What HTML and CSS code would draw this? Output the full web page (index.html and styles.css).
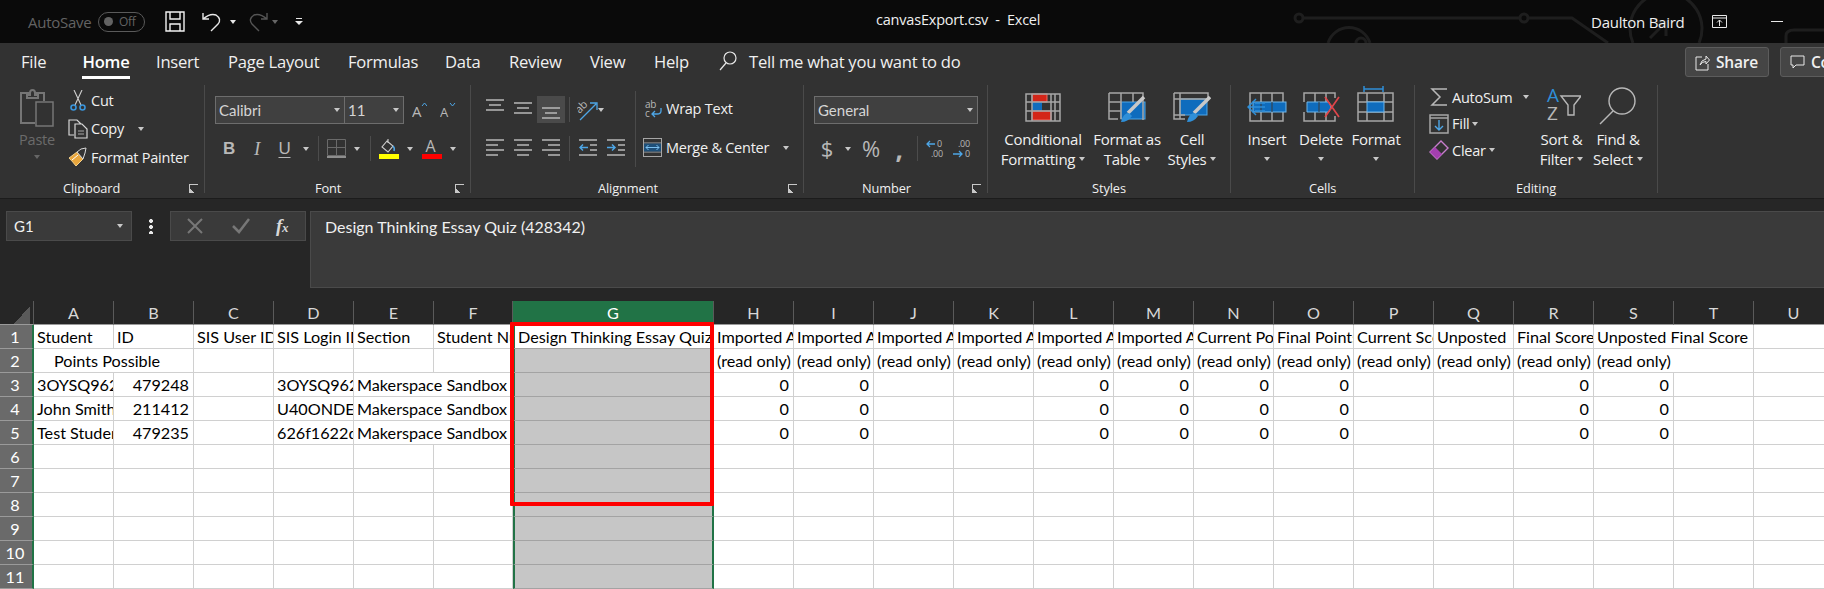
FILE: index.html
```html
<!DOCTYPE html>
<html lang="en">
<head>
    <meta charset="UTF-8">
    <meta name="viewport" content="width=device-width, initial-scale=1.0">
    <title>canvasExport.csv - Excel</title>
    <link rel="stylesheet" href="styles.css">
</head>
<body>
    <header class="titlebar">
        <svg class="circuit" width="560" height="43" viewBox="0 0 560 43" fill="none">
            <circle cx="11" cy="18" r="4"/>
            <path d="M15 18H232M240 18H284L320 43M40 43a22 22 0 0 1 42 0M345 43a36 36 0 1 1 66 0M362 38L378 22H362M378 22V36M498 43V36Q498 30 506 30H560M68 43a5 5 0 0 1 10 0"/>
            <circle cx="236" cy="18" r="4"/>
        </svg>
        <div class="quick">
            <span class="autosave">AutoSave</span>
            <span class="toggle"><i></i>Off</span>
            <svg class="save" width="20" height="21" viewBox="0 0 20 21" fill="none" stroke="#f2f2f2" stroke-width="1.4"><path d="M1 1H19V20H1ZM5 1V8H15V1M5 20V13H15V20"/></svg>
            <svg class="undo" width="20" height="21" viewBox="0 0 20 21" fill="none" stroke="#e8e8e8" stroke-width="1.4"><path d="M1 2V8H7M1 8Q8 2 14 4Q20 8 16 13L9 20"/></svg>
            <i class="caret white q1"></i>
            <svg class="redo" width="20" height="21" viewBox="0 0 20 21" fill="none" stroke="#555" stroke-width="1.4"><path d="M19 2V8H13M19 8Q12 2 6 4Q0 8 4 13L11 20"/></svg>
            <i class="caret dim q2"></i>
            <svg class="custom" width="8" height="8" viewBox="0 0 8 8" fill="#e8e8e8"><path d="M1 0H7V1H1ZM0 3H8L4 7Z"/></svg>
        </div>
        <div class="doc-title">canvasExport.csv&nbsp; - &nbsp;Excel</div>
        <div class="user">
            <span class="user-name">Daulton Baird</span>
            <svg width="15" height="13" viewBox="0 0 15 13" fill="none" stroke="#e8e8e8"><path d="M.5.5H14.5V12.5H.5ZM.5 3H14.5M7.5 11V5M5 7.5L7.5 5L10 7.5"/></svg>
            <i class="minimize"></i>
        </div>
    </header>

    <nav class="tabs">
        <span>File</span>
        <span class="active">Home</span>
        <span>Insert</span>
        <span>Page Layout</span>
        <span>Formulas</span>
        <span>Data</span>
        <span>Review</span>
        <span>View</span>
        <span>Help</span>
        <svg width="18" height="20" viewBox="0 0 18 20" fill="none" stroke="#e8e8e8" stroke-width="1.2"><circle cx="11" cy="7" r="6"/><path d="M7 12L1 19"/></svg>
        <span>Tell me what you want to do</span>
        <div class="tab-actions">
            <button class="action share">
                <svg width="15" height="17" viewBox="0 0 15 17" fill="none" stroke="#e8e8e8"><path d="M7 3H1V16H13V10M5 11Q6 6 11 5V2L14.500 6L11 10V7.500Q7 7.500 5 11Z"/></svg>
                Share
            </button>
            <button class="action">
                <svg width="15" height="15" viewBox="0 0 15 15" fill="none" stroke="#e8e8e8"><path d="M1 1H14V10H6L3 13V10H1Z"/></svg>
                Comments
            </button>
        </div>
    </nav>

    <section class="ribbon">
        <div class="group clipboard">
            <div class="group-body">
                <div class="paste">
                    <svg width="34" height="38" viewBox="0 0 34 38" fill="none" stroke="#757575" stroke-width="2"><path d="M10 4H1V34H15M24 12V4H15M10 6V4Q10 1 12.500 1Q15 1 15 4V6H18V9H7V6Z"/><path d="M16 13H33V37H16Z" stroke-width="1.5"/></svg>
                    <span>Paste</span>
                    <i class="caret dim"></i>
                </div>
                <div class="tool-list">
                    <div class="tool">
                        <svg width="20" height="21" viewBox="0 0 20 21" fill="none" stroke="#cfcfcf" stroke-width="1.1"><path d="M6 0L13 15M14 0L7 15"/><g stroke="#3a96dd" stroke-width="1.6"><circle cx="5.500" cy="17.500" r="2.500"/><circle cx="14.500" cy="17.500" r="2.500"/></g></svg>
                        <span>Cut</span>
                    </div>
                    <div class="tool">
                        <svg width="20" height="20" viewBox="0 0 20 20" fill="none" stroke="#d8d8d8" stroke-width="1.2"><path d="M7 1H1V16H6"/><path d="M7 1H9L13 5M7 5H14L19 10V19H7Z"/><path d="M10 12H16M10 15H16" stroke="#a6a6a6"/></svg>
                        <span>Copy</span>
                        <i class="caret copy-caret"></i>
                    </div>
                    <div class="tool">
                        <svg width="20" height="20" viewBox="0 0 20 20"><path d="M1 11L9 5L15 12L8 19Q5 15 1 11Z" fill="#e9a63c" stroke="#f5d08a"/><path d="M9 5L13 2L18 1L17 6L15 12Z" fill="#333" stroke="#d8d8d8"/><path d="M4 13L10 8" stroke="#fff"/></svg>
                        <span>Format Painter</span>
                    </div>
                </div>
            </div>
            <div class="group-label"><span>Clipboard</span><i class="launcher"></i></div>
        </div>

        <div class="group font">
            <div class="group-body stack">
                <div class="combo-row">
                    <div class="combo font-name"><span>Calibri</span><i class="caret"></i></div>
                    <div class="combo font-size"><span>11</span><i class="caret"></i></div>
                    <svg class="grow" width="15" height="16" viewBox="0 0 15 16"><text x="0" y="15" class="ico-text" font-size="15">A</text><path d="M10 4L12.500 1L15 4" fill="none" stroke="#4ea6e6"/></svg>
                    <svg class="shrink" width="16" height="16" viewBox="0 0 16 16"><text x="0" y="15" class="ico-text" font-size="13">A</text><path d="M10 1L12.500 4L15 1" fill="none" stroke="#4ea6e6"/></svg>
                </div>
                <div class="font-tools">
                    <b class="btn-b">B</b>
                    <i class="btn-i">I</i>
                    <span class="btn-u">U</span>
                    <i class="caret"></i>
                    <i class="vsep"></i>
                    <svg width="19" height="19" viewBox="0 0 19 19" fill="none" stroke="#6a6a6a"><path d="M.5.5H18.500V16.500H.5ZM9.500.5V16.500M.5 8.500H18.500"/><path d="M0 18H19" stroke="#a6a6a6" stroke-width="1.6"/></svg>
                    <i class="caret"></i>
                    <i class="vsep"></i>
                    <svg width="20" height="21" viewBox="0 0 20 21" fill="none" stroke="#cfcfcf" stroke-width="1.1"><path d="M8 3L3 9L9 14L14 8ZM9 1V5"/><path d="M14 8Q16 10 15 13" stroke="#4ea6e6" stroke-width="1.5"/><rect x="0" y="16" width="20" height="5" fill="#ffff00" stroke="none"/></svg>
                    <i class="caret"></i>
                    <svg width="20" height="21" viewBox="0 0 20 21"><text x="3.500" y="14" class="ico-text" font-size="16">A</text><rect x="0" y="16" width="20" height="5" fill="#ff0000"/></svg>
                    <i class="caret"></i>
                </div>
            </div>
            <div class="group-label"><span>Font</span><i class="launcher"></i></div>
        </div>

        <div class="group alignment">
            <div class="group-body">
                <div class="align-grid">
                    <svg class="ln" width="18" height="27" viewBox="0 0 18 27"><path d="M0 4H18M3 9H15M0 14H18"/></svg>
                    <svg class="ln" width="18" height="27" viewBox="0 0 18 27"><path d="M0 7H18M3 12H15M0 17H18"/></svg>
                    <span class="align-on"><svg class="ln" width="18" height="27" viewBox="0 0 18 27"><path d="M0 12H18M3 17H15M0 22H18"/></svg></span>
                    <i class="vsep"></i>
                    <svg width="22" height="22" viewBox="0 0 22 22"><text x="0" y="11" class="ico-text" font-size="11" transform="rotate(-45 6 10)">ab</text><path d="M3 21L19 5M13 4H20V11" fill="none" stroke="#4ea6e6" stroke-width="1.3"/></svg>
                    <i class="caret"></i>
                    <svg class="ln" width="18" height="27" viewBox="0 0 18 27"><path d="M0 5H18M0 10H12M0 15H18M0 20H12"/></svg>
                    <svg class="ln" width="18" height="27" viewBox="0 0 18 27"><path d="M0 5H18M3 10H15M0 15H18M3 20H15"/></svg>
                    <svg class="ln" width="18" height="27" viewBox="0 0 18 27"><path d="M0 5H18M6 10H18M0 15H18M6 20H18"/></svg>
                    <i class="vsep"></i>
                    <svg class="ln" width="18" height="27" viewBox="0 0 18 27"><path d="M0 5H18M11 10H18M11 15H18M0 20H18"/><path d="M9 12.500H1M4 9.500L1 12.500L4 15.500" class="blue"/></svg>
                    <svg class="ln" width="18" height="27" viewBox="0 0 18 27"><path d="M0 5H18M11 10H18M11 15H18M0 20H18"/><path d="M0 12.500H8M5 9.500L8 12.500L5 15.500" class="blue"/></svg>
                </div>
                <i class="tall-sep"></i>
                <div class="wrap-col">
                    <div class="tool">
                        <svg width="20" height="20" viewBox="0 0 20 20"><text x="2" y="9" class="ico-text" font-size="10">ab</text><text x="2" y="18" class="ico-text" font-size="10">c</text><path d="M18 9V12Q18 15 14 15H9M12 12L9 15L12 18" fill="none" stroke="#4ea6e6" stroke-width="1.3"/></svg>
                        <span>Wrap Text</span>
                    </div>
                    <div class="tool">
                        <svg width="20" height="20" viewBox="0 0 20 20" fill="none"><rect x=".5" y=".5" width="18" height="18" stroke="#a6a6a6"/><path d="M.5 5H18.500M.5 14H18.500" stroke="#a6a6a6"/><rect x="1" y="5.500" width="17" height="8" fill="#1e4f78"/><path d="M3 9.500H16M5.500 7L3 9.500L5.500 12M13.500 7L16 9.500L13.500 12" stroke="#7cc0f0"/></svg>
                        <span>Merge &amp; Center</span>
                        <i class="caret merge-caret"></i>
                    </div>
                </div>
            </div>
            <div class="group-label"><span>Alignment</span><i class="launcher"></i></div>
        </div>

        <div class="group number">
            <div class="group-body stack">
                <div class="combo general"><span>General</span><i class="caret"></i></div>
                <div class="number-tools">
                    <span class="sym-dollar">$</span>
                    <i class="caret"></i>
                    <span class="sym-pct">%</span>
                    <span class="sym-comma">,</span>
                    <i class="vsep"></i>
                    <svg width="20" height="21" viewBox="0 0 20 21"><text x="11" y="9" class="ico-text" font-size="9">0</text><text x="5" y="19" class="ico-text" font-size="9">.00</text><path d="M9 6H1M4 3L1 6L4 9" fill="none" stroke="#4ea6e6" stroke-width="1.3"/></svg>
                    <svg width="20" height="21" viewBox="0 0 20 21"><text x="5" y="9" class="ico-text" font-size="9">.00</text><text x="12" y="19" class="ico-text" font-size="9">0</text><path d="M0 16H9M6 13L9 16L6 19" fill="none" stroke="#4ea6e6" stroke-width="1.3"/></svg>
                </div>
            </div>
            <div class="group-label"><span>Number</span><i class="launcher"></i></div>
        </div>

        <div class="group styles">
            <div class="group-body">
                <div class="big w-cond">
                    <svg width="36" height="36" viewBox="0 0 36 36" fill="none">
                        <rect x="7" y="8" width="15" height="8" fill="#d32518" stroke="#f06a60"/>
                        <rect x="7" y="16" width="10" height="9" fill="#0f6cbd"/>
                        <rect x="7" y="25" width="19" height="9" fill="#d32518" stroke="#f06a60"/>
                        <path class="cell-grid" d="M1 8H35V35H1ZM7 8V35M26 8V35M30 8V35M1 16H35M1 25H35"/>
                    </svg>
                    <span>Conditional</span>
                    <span>Formatting<i class="caret"></i></span>
                </div>
                <div class="big w-table">
                    <svg width="38" height="36" viewBox="0 0 38 36" fill="none">
                        <rect x="13" y="16" width="24" height="17" fill="#0f6cbd" stroke="#4ea6e6"/>
                        <path class="cell-grid" d="M1 7H35V34M1 7V33H10M13 7V33M25 7V16M1 16H13M1 25H13"/>
                        <path d="M36 11L20 27" stroke="#c8c8c8" stroke-width="3.500"/><path d="M21 27Q15 27 13 36Q20 36 24 30Z" fill="#2f8fd8"/>
                    </svg>
                    <span>Format as</span>
                    <span>Table<i class="caret"></i></span>
                </div>
                <div class="big w-cell">
                    <svg width="38" height="36" viewBox="0 0 38 36" fill="none">
                        <rect x="7" y="13" width="27" height="16" fill="#0f6cbd" stroke="#4ea6e6"/>
                        <path class="cell-grid" d="M1 7H35V13M1 7V33H12M7 7V33M1 13H35M1 29H12"/>
                        <path d="M37 11L21 27" stroke="#c8c8c8" stroke-width="3.500"/><path d="M22 27Q16 27 14 36Q21 36 25 30Z" fill="#2f8fd8"/>
                    </svg>
                    <span>Cell</span>
                    <span>Styles<i class="caret"></i></span>
                </div>
            </div>
            <div class="group-label"><span>Styles</span></div>
        </div>

        <div class="group cells">
            <div class="group-body">
                <div class="big w-ins">
                    <svg width="40" height="36" viewBox="0 0 40 36" fill="none">
                        <path class="cell-grid" d="M3 7H36V35H3ZM14 7V35M25 7V35"/>
                        <rect x="6" y="16" width="33" height="10" fill="#0f6cbd" stroke="#6fb6ea"/>
                        <path d="M14 16V26M25 16V26" stroke="#3a3a3a"/>
                        <path d="M18 21H2M9 13L1 21L9 29M18 17H8M18 25H8" stroke="#2f8fd8" stroke-width="1.500"/>
                    </svg>
                    <span>Insert</span>
                    <i class="caret"></i>
                </div>
                <div class="big w-del">
                    <svg width="40" height="36" viewBox="0 0 40 36" fill="none">
                        <path class="cell-grid" d="M3 16V7H34V12M3 26V35H34V30M14 7V16M25 7V16M14 26V35M25 26V35"/>
                        <path d="M6 16H28L30 21L28 26H6Z" fill="#0f6cbd" stroke="#6fb6ea"/>
                        <path d="M18 16V26" stroke="#3a3a3a"/>
                        <path d="M24 11L38 31M38 11L24 31" stroke="#e0454a" stroke-width="1.700"/>
                    </svg>
                    <span>Delete</span>
                    <i class="caret"></i>
                </div>
                <div class="big w-fmt">
                    <svg width="38" height="36" viewBox="0 0 38 36" fill="none">
                        <path d="M7 3H26M7 0V6M26 0V6" stroke="#2f8fd8" stroke-width="1.500"/>
                        <path class="cell-grid" d="M1 7H36V35H1ZM10 7V16M10 26V35M27 7V16M27 26V35M1 16H36M1 26H36"/>
                        <rect x="10" y="16" width="17" height="10" fill="#0f6cbd" stroke="#6fb6ea"/>
                    </svg>
                    <span>Format</span>
                    <i class="caret"></i>
                </div>
            </div>
            <div class="group-label"><span>Cells</span></div>
        </div>

        <div class="group editing">
            <div class="group-body">
                <div class="edit-list">
                    <div class="tool">
                        <svg width="20" height="20" viewBox="0 0 20 20" fill="none" stroke="#b8b8b8" stroke-width="1.500"><path d="M18 2H3L11 10L3 18H18"/></svg>
                        <span>AutoSum</span>
                        <i class="caret sum-caret"></i>
                    </div>
                    <div class="tool">
                        <svg width="20" height="20" viewBox="0 0 20 20" fill="none"><path d="M1 1H19V19H1ZM1 4H19" stroke="#a6a6a6" stroke-width="1.500"/><path d="M10 6V16M6 12L10 16L14 12" stroke="#4ea6e6" stroke-width="1.400"/></svg>
                        <span>Fill</span>
                        <i class="caret"></i>
                    </div>
                    <div class="tool">
                        <svg width="20" height="20" viewBox="0 0 20 20"><path d="M1 12L12 1L19 8L8 19Z" fill="none" stroke="#c77dcc" stroke-width="1.400"/><path d="M1 12L6 7L13 14L8 19Z" fill="#a43fb0"/></svg>
                        <span>Clear</span>
                        <i class="caret"></i>
                    </div>
                </div>
                <div class="big w-sort">
                    <svg width="38" height="36" viewBox="0 0 38 36" fill="none">
                        <text x="4" y="16" font-size="19" class="ico-blue">A</text>
                        <text x="4" y="34" font-size="19" class="ico-text">Z</text>
                        <path d="M18 10H38L31 19V29H25V19Z" stroke="#b8b8b8" stroke-width="1.400"/>
                    </svg>
                    <span>Sort &amp;</span>
                    <span>Filter<i class="caret"></i></span>
                </div>
                <div class="big w-find">
                    <svg width="38" height="38" viewBox="0 0 38 38" fill="none" stroke="#b8b8b8" stroke-width="1.400"><circle cx="23" cy="14" r="13"/><path d="M14 24L1 37"/></svg>
                    <span>Find &amp;</span>
                    <span>Select<i class="caret"></i></span>
                </div>
            </div>
            <div class="group-label"><span>Editing</span></div>
        </div>
    </section>

    <section class="formula-bar">
        <div class="name-box"><span>G1</span><i class="caret"></i></div>
        <i class="dots"></i>
        <div class="fx-box">
            <svg width="16" height="16" viewBox="0 0 16 16" fill="none" stroke="#777" stroke-width="2"><path d="M1 1L15 15M15 1L1 15"/></svg>
            <svg width="18" height="16" viewBox="0 0 18 16" fill="none" stroke="#777" stroke-width="2.500"><path d="M1 8L7 14L17 1"/></svg>
            <span class="fx">f<small>x</small></span>
        </div>
        <div class="formula-text">Design Thinking Essay Quiz (428342)</div>
    </section>

    <main class="sheet">
        <table>
            <colgroup>
                <col class="c-head"><col class="c-80"><col class="c-80"><col class="c-80"><col class="c-80"><col class="c-80"><col class="c-79"><col class="c-g">
                <col class="c-80"><col class="c-80"><col class="c-80"><col class="c-80"><col class="c-80"><col class="c-80"><col class="c-80"><col class="c-80"><col class="c-80"><col class="c-80"><col class="c-80"><col class="c-80"><col class="c-80"><col class="c-80">
            </colgroup>
            <thead>
                <tr>
                    <th class="corner"><i></i></th>
                    <th>A</th><th>B</th><th>C</th><th>D</th><th>E</th><th>F</th><th class="col-on">G</th><th>H</th><th>I</th><th>J</th><th>K</th><th>L</th><th>M</th><th>N</th><th>O</th><th>P</th><th>Q</th><th>R</th><th>S</th><th>T</th><th>U</th>
                </tr>
            </thead>
            <tbody>
                <tr><th>1</th><td>Student</td><td>ID</td><td>SIS User ID</td><td>SIS Login ID</td><td>Section</td><td>Student Number</td><td class="sel first">Design Thinking Essay Quiz</td><td>Imported Assignments</td><td>Imported Assignments</td><td>Imported Assignments</td><td>Imported Assignments</td><td>Imported Assignments</td><td>Imported Assignments</td><td>Current Points</td><td>Final Points</td><td>Current Score</td><td>Unposted</td><td>Final Score</td><td colspan="2">Unposted Final Score</td><td></td></tr>
                <tr><th>2</th><td colspan="2" class="possible">Points Possible</td><td></td><td></td><td></td><td></td><td class="sel"></td><td>(read only)</td><td>(read only)</td><td>(read only)</td><td>(read only)</td><td>(read only)</td><td>(read only)</td><td>(read only)</td><td>(read only)</td><td>(read only)</td><td>(read only)</td><td>(read only)</td><td colspan="2">(read only)</td><td></td></tr>
                <tr><th>3</th><td>3OYSQ962</td><td class="num">479248</td><td></td><td>3OYSQ962</td><td colspan="2">Makerspace Sandbox</td><td class="sel"></td><td class="num">0</td><td class="num">0</td><td></td><td></td><td class="num">0</td><td class="num">0</td><td class="num">0</td><td class="num">0</td><td></td><td></td><td class="num">0</td><td class="num">0</td><td></td><td></td></tr>
                <tr><th>4</th><td>John Smith</td><td class="num">211412</td><td></td><td>U40ONDE12</td><td colspan="2">Makerspace Sandbox</td><td class="sel"></td><td class="num">0</td><td class="num">0</td><td></td><td></td><td class="num">0</td><td class="num">0</td><td class="num">0</td><td class="num">0</td><td></td><td></td><td class="num">0</td><td class="num">0</td><td></td><td></td></tr>
                <tr><th>5</th><td>Test Student</td><td class="num">479235</td><td></td><td>626f1622d8</td><td colspan="2">Makerspace Sandbox</td><td class="sel"></td><td class="num">0</td><td class="num">0</td><td></td><td></td><td class="num">0</td><td class="num">0</td><td class="num">0</td><td class="num">0</td><td></td><td></td><td class="num">0</td><td class="num">0</td><td></td><td></td></tr>
                <tr><th>6</th><td></td><td></td><td></td><td></td><td></td><td></td><td class="sel"></td><td></td><td></td><td></td><td></td><td></td><td></td><td></td><td></td><td></td><td></td><td></td><td></td><td></td><td></td></tr>
                <tr><th>7</th><td></td><td></td><td></td><td></td><td></td><td></td><td class="sel"></td><td></td><td></td><td></td><td></td><td></td><td></td><td></td><td></td><td></td><td></td><td></td><td></td><td></td><td></td></tr>
                <tr><th>8</th><td></td><td></td><td></td><td></td><td></td><td></td><td class="sel"></td><td></td><td></td><td></td><td></td><td></td><td></td><td></td><td></td><td></td><td></td><td></td><td></td><td></td><td></td></tr>
                <tr><th>9</th><td></td><td></td><td></td><td></td><td></td><td></td><td class="sel"></td><td></td><td></td><td></td><td></td><td></td><td></td><td></td><td></td><td></td><td></td><td></td><td></td><td></td><td></td></tr>
                <tr><th>10</th><td></td><td></td><td></td><td></td><td></td><td></td><td class="sel"></td><td></td><td></td><td></td><td></td><td></td><td></td><td></td><td></td><td></td><td></td><td></td><td></td><td></td><td></td></tr>
                <tr><th>11</th><td></td><td></td><td></td><td></td><td></td><td></td><td class="sel"></td><td></td><td></td><td></td><td></td><td></td><td></td><td></td><td></td><td></td><td></td><td></td><td></td><td></td><td></td></tr>
            </tbody>
        </table>
        <div class="callout"></div>
    </main>
</body>
</html>
```

FILE: styles.css
```css
* {
    box-sizing: border-box;
}
html, body {
    margin: 0;
    height: 589px;
    overflow: hidden;
}
body {
    font-family: "Open Sans", sans-serif;
    font-size: 14.5px;
    letter-spacing: -0.25px;
    color: #f0f0f0;
    background-color: #262626;
}
svg {
    display: block;
    flex: none;
}
.ico-text {
    fill: #b8b8b8;
    font-family: "Open Sans", sans-serif;
}
.ico-blue {
    fill: #2f8fd8;
    font-family: "Open Sans", sans-serif;
}
.caret {
    display: inline-block;
    flex: none;
    width: 0;
    height: 0;
    border-left: 3.5px solid transparent;
    border-right: 3.5px solid transparent;
    border-top: 4px solid #c8c8c8;
}
.caret.white {
    border-top-color: #e8e8e8;
}
.caret.dim {
    border-top-color: #666;
}
.vsep {
    display: block;
    width: 1px;
    height: 25px;
    background-color: #4c4c4c;
}

/* title bar */
.titlebar {
    position: relative;
    display: grid;
    grid-template-columns: 876px 1fr 233px;
    align-items: center;
    height: 43px;
    background-color: #0a0a0a;
    overflow: hidden;
}
.circuit {
    position: absolute;
    left: 1288px;
    top: 0;
    stroke: #1e1e1e;
    stroke-width: 3;
}
.quick {
    position: relative;
    display: flex;
    align-items: center;
    padding-left: 28px;
}
.autosave {
    width: 70px;
    font-size: 15px;
    color: #636363;
}
.toggle {
    display: flex;
    align-items: center;
    gap: 6px;
    width: 47px;
    height: 20px;
    padding-left: 5px;
    font-size: 12px;
    color: #636363;
    border: 1px solid #5a5a5a;
    border-radius: 10px;
}
.toggle i {
    width: 9px;
    height: 9px;
    border-radius: 50%;
    background-color: #636363;
}
.save {
    margin-left: 20px;
}
.undo {
    margin-left: 17px;
}
.q1 {
    margin-left: 8px;
}
.redo {
    margin-left: 12px;
}
.q2 {
    margin-left: 4px;
}
.custom {
    margin-left: 17px;
}
.doc-title {
    position: relative;
    padding-bottom: 4px;
    font-size: 14.5px;
    letter-spacing: -0.2px;
}
.user {
    position: relative;
    display: flex;
    align-items: center;
    height: 100%;
}
.user-name {
    width: 121px;
    font-size: 15px;
}
.minimize {
    width: 12px;
    height: 1px;
    margin-left: 44px;
    background-color: #e8e8e8;
}

/* tabs */
.tabs {
    display: grid;
    grid-template-columns: 61px 74px 72px 120px 97px 64px 81px 64px 65px 30px 1fr auto;
    align-items: center;
    height: 36px;
    padding-left: 21px;
    font-size: 16.6px;
    letter-spacing: -0.25px;
    background-color: #323232;
}
.tabs .active {
    width: 48px;
    height: 36px;
    line-height: 37px;
    text-align: center;
    white-space: nowrap;
    font-weight: 600;
    color: #fff;
    border-bottom: 3px solid #fff;
}
.tab-actions {
    display: flex;
    gap: 11px;
    width: 139px;
    margin-top: 2px;
    overflow: hidden;
}
.action {
    flex: none;
    display: flex;
    align-items: center;
    gap: 6px;
    width: 84px;
    height: 30px;
    padding: 0 0 0 9px;
    font: 600 15.5px "Open Sans", sans-serif;
    letter-spacing: -0.2px;
    color: #f0f0f0;
    background-color: #454545;
    border: 1px solid #5c5c5c;
    border-radius: 3px;
}
.action:not(.share) {
    width: 110px;
    border-radius: 3px 0 0 3px;
}

/* ribbon */
.ribbon {
    display: flex;
    height: 120px;
    padding-top: 6px;
    background-color: #323232;
    border-bottom: 1px solid #1c1c1c;
}
.group {
    display: flex;
    flex-direction: column;
    height: 108px;
    border-right: 1px solid #4a4a4a;
}
.clipboard { width: 205px; }
.font { width: 266px; }
.alignment { width: 333px; }
.number { width: 184px; }
.styles { width: 243px; }
.cells { width: 184px; }
.editing { width: 243px; }
.group-body {
    display: flex;
    height: 98px;
}
.group-body.stack {
    flex-direction: column;
    padding: 11px 0 0 10px;
}
.group-label {
    display: flex;
    align-items: center;
    height: 10px;
    font-size: 12.8px;
    letter-spacing: -0.1px;
}
.clipboard .group-label { padding-left: 63px; }
.font .group-label { padding-left: 110px; }
.alignment .group-label { padding-left: 127px; }
.number .group-label { padding-left: 58px; }
.styles .group-label { padding-left: 104px; }
.cells .group-label { padding-left: 78px; }
.editing .group-label { padding-left: 101px; }
.launcher {
    position: relative;
    width: 9px;
    height: 9px;
    margin-left: auto;
    margin-right: 6px;
    border-left: 1px solid #c8c8c8;
    border-top: 1px solid #c8c8c8;
    background: linear-gradient(45deg, #c8c8c8 0 30%, transparent 30%);
}

/* tool rows */
.tool {
    display: flex;
    align-items: center;
    gap: 3px;
    white-space: nowrap;
}
.paste {
    display: flex;
    flex-direction: column;
    align-items: center;
    width: 48px;
    margin-left: 13px;
    padding-top: 4px;
    color: #6b6b6b;
}
.paste span {
    margin-top: 3px;
}
.paste .caret {
    margin-top: 6px;
}
.tool-list {
    margin-left: 7px;
    padding-top: 1px;
}
.tool-list .tool {
    height: 28.5px;
}
.copy-caret {
    margin-left: 11px;
}

/* font */
.combo {
    display: flex;
    align-items: center;
    justify-content: space-between;
    height: 28px;
    padding: 0 4px 0 3px;
    font-family: Lato, sans-serif;
    font-size: 15px;
    letter-spacing: 0;
    color: #d5d5d5;
    background-color: #404040;
    border: 1px solid #6d6d6d;
}
.combo-row {
    display: flex;
    align-items: center;
}
.font-name {
    width: 130px;
}
.font-size {
    width: 60px;
    margin-left: -1px;
}
.grow {
    margin-left: 8px;
}
.shrink {
    margin-left: 13px;
}
.font-tools {
    display: grid;
    grid-template-columns: 28px 28px 27px 15px 11px 25px 16px 11px 26px 16px 28px 14px;
    justify-items: center;
    align-items: center;
    height: 27px;
    margin-top: 11px;
}
.btn-b, .btn-i, .btn-u {
    font-family: "Liberation Sans", sans-serif;
    font-size: 17px;
    color: #b8b8b8;
}
.btn-i {
    font-family: "Liberation Serif", serif;
    font-size: 19px;
}
.btn-u {
    text-decoration: underline;
    text-underline-offset: 3px;
}

/* alignment */
.ln {
    fill: none;
    stroke: #b8b8b8;
    stroke-width: 1.5;
}
.ln .blue {
    stroke: #4ea6e6;
}
.align-grid {
    display: grid;
    grid-template-columns: 28px 28px 28px 9px 28px 28px;
    grid-auto-rows: 27px;
    row-gap: 12px;
    justify-items: center;
    align-items: center;
    width: 151px;
    margin: 11px 0 0 10px;
    align-content: start;
}
.align-on {
    display: flex;
    justify-content: center;
    width: 28px;
    height: 27px;
    background-color: #4a4a4a;
}
.align-grid .caret {
    justify-self: start;
    margin-left: -4px;
}
.tall-sep {
    width: 1px;
    height: 76px;
    margin: 6px 7px 0 3px;
    background-color: #4a4a4a;
}
.wrap-col {
    display: flex;
    flex-direction: column;
    gap: 12px;
    padding-top: 10px;
}
.wrap-col .tool {
    height: 27px;
}
.merge-caret {
    margin-left: 11px;
}

/* number */
.general {
    width: 164px;
}
.number-tools {
    display: grid;
    grid-template-columns: 26px 16px 30px 26px 10px 27px 28px;
    justify-items: center;
    align-items: center;
    height: 27px;
    margin-top: 11px;
}
.sym-dollar, .sym-pct, .sym-comma {
    font-size: 22px;
    line-height: 27px;
    color: #b8b8b8;
}
.sym-comma {
    font-weight: 700;
    font-size: 26px;
    line-height: 20px;
}

/* large buttons */
.big {
    display: flex;
    flex-direction: column;
    align-items: center;
    padding-top: 1px;
    font-size: 15px;
    line-height: 20px;
    white-space: nowrap;
}
.big svg {
    margin-bottom: 7px;
}
.big span {
    display: flex;
    align-items: center;
    gap: 4px;
    height: 20px;
}
.big > .caret {
    margin-top: 8px;
}
.cell-grid {
    stroke: #a6a6a6;
    stroke-width: 1.5;
}
.styles .group-body { padding-left: 17px; }
.w-cond { width: 76px; }
.w-table { width: 72px; margin-left: 10px; }
.w-cell { width: 44px; margin-left: 7px; }
.cells .group-body { padding-left: 9px; }
.w-ins, .w-del { width: 54px; }
.w-fmt { width: 56px; }
.editing .group-body { padding-left: 14px; }
.edit-list {
    width: 107px;
    margin-top: -1px;
}
.edit-list .tool {
    height: 26.5px;
}
.sum-caret {
    margin-left: 8px;
}
.w-sort { width: 51px; }
.w-find { width: 56px; margin-left: 3px; }
.w-find svg {
    margin-top: 1px;
    margin-bottom: 4px;
}

/* formula bar */
.formula-bar {
    display: flex;
    height: 102px;
    padding-top: 12px;
    background-color: #262626;
}
.name-box {
    display: flex;
    align-items: center;
    justify-content: space-between;
    width: 126px;
    height: 30px;
    margin-left: 6px;
    padding: 0 8px 0 7px;
    font-family: Lato, sans-serif;
    font-size: 15px;
    letter-spacing: 0;
    background-color: #3a3a3a;
    border: 1px solid #4a4a4a;
}
.dots {
    width: 4px;
    height: 16px;
    margin: 7px 17px 0 17px;
    background-image: radial-gradient(circle, #e8e8e8 1.8px, transparent 2.2px);
    background-size: 4px 6px;
}
.fx-box {
    display: flex;
    align-items: center;
    width: 136px;
    height: 30px;
    padding-left: 16px;
    background-color: #3a3a3a;
    border: 1px solid #4a4a4a;
}
.fx-box svg + svg {
    margin-left: 29px;
}
.fx {
    margin-left: 26px;
    font: italic 700 19px "Liberation Serif", serif;
    color: #d8d8d8;
}
.fx small {
    font-size: 13px;
}
.formula-text {
    flex: 1;
    height: 77px;
    margin-left: 4px;
    padding: 5px 0 0 14px;
    font-family: Lato, sans-serif;
    font-size: 16px;
    letter-spacing: 0;
    background-color: #3a3a3a;
    border: 1px solid #4a4a4a;
    border-right: 0;
}

/* sheet */
.sheet {
    position: relative;
    height: 288px;
    overflow: hidden;
}
table {
    width: 1834px;
    table-layout: fixed;
    border-collapse: separate;
    border-spacing: 0;
    font-family: Lato, sans-serif;
    font-size: 16.2px;
    letter-spacing: 0;
    background-color: #fff;
}
.c-head { width: 34px; }
.c-80 { width: 80px; }
.c-79 { width: 79px; }
.c-g { width: 201px; }
tr {
    height: 24px;
}
thead th {
    padding: 0;
    font-weight: 400;
    color: #d8d8d8;
    background-color: #262626;
    border-right: 1px solid #5a5a5a;
    border-bottom: 1px solid #9a9a9a;
}
thead th.col-on {
    color: #fff;
    background-color: #217346;
}
.corner {
    position: relative;
}
.corner i {
    display: block;
    width: 16px;
    height: 18px;
    margin: 4px 0 0 14px;
    background: linear-gradient(to bottom right, transparent 50%, #5a5a5a 50%);
}
tbody th {
    padding: 0 2px 0 0;
    font-weight: 400;
    color: #fff;
    background-color: #6a6a6a;
    border-right: 2px solid #217346;
    border-bottom: 1px solid #9a9a9a;
}
td {
    padding: 0 3px;
    color: #000;
    white-space: nowrap;
    overflow: hidden;
    border-right: 1px solid #d0d0d0;
    border-bottom: 1px solid #d0d0d0;
}
td.num {
    text-align: right;
    padding-right: 4px;
}
td.possible {
    padding-left: 20px;
}
td.sel {
    padding-left: 3px;
    background-color: #c6c6c6;
    border-left: 2px solid #217346;
    border-right: 2px solid #217346;
    border-bottom-color: #a3a3a3;
}
td.sel.first {
    background-color: #fff;
}
.callout {
    position: absolute;
    left: 510px;
    top: 21px;
    width: 204px;
    height: 184px;
    border: 4px solid #ff0000;
    border-radius: 1px;
}
```
